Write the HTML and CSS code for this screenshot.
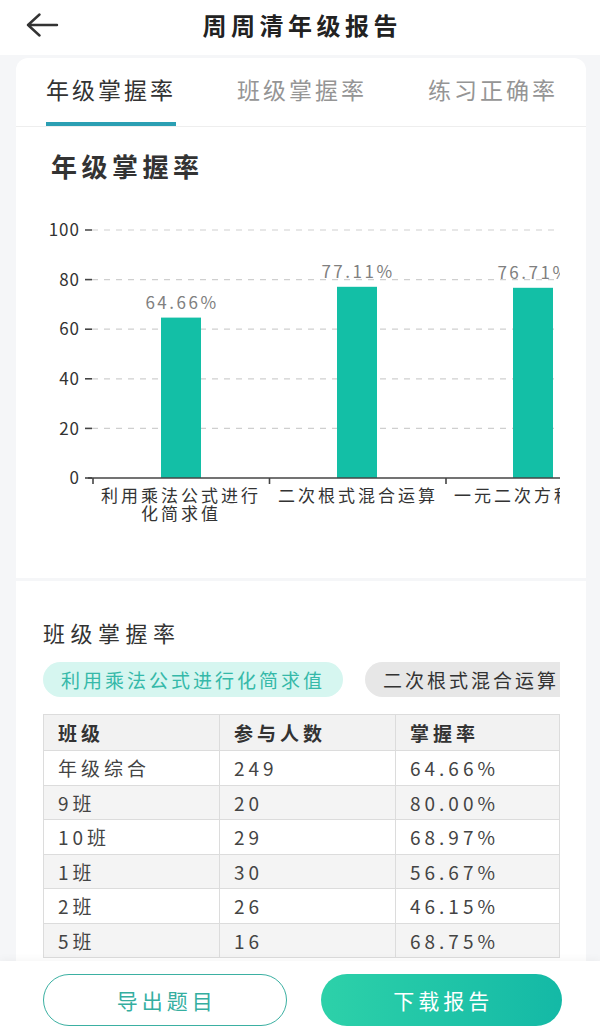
FILE: index.html
```html
<!DOCTYPE html>
<html lang="zh-CN">
<head>
  <meta charset="UTF-8" />
  <meta name="viewport" content="width=device-width, initial-scale=1.0"/>
  <title>周周清年级报告</title>
  <link rel="stylesheet" href="styles.css">
</head>
<body>

  <header class="top-bar">
    <span class="back">
      <svg width="34" height="24" viewBox="0 0 34 24">
        <path d="M2 12 H31 M13.5 1.5 L2 12 L13.5 22.5" fill="none" stroke="#333" stroke-width="2.4" stroke-linecap="round" stroke-linejoin="round"/>
      </svg>
    </span>
    <h1>周周清年级报告</h1>
    <span></span>
  </header>

  <!-- grade chart -->
  <div class="card card-grade">
    <div class="tabs">
      <div class="tab active">年级掌握率</div>
      <div class="tab">班级掌握率</div>
      <div class="tab">练习正确率</div>
    </div>

    <h2 class="chart-title">年级掌握率</h2>

    <svg class="chart" viewBox="16 184 544 394" width="544" height="394">
      <g class="grid">
        <line x1="92" y1="230" x2="557" y2="230"/>
        <line x1="92" y1="279.6" x2="557" y2="279.6"/>
        <line x1="92" y1="329.2" x2="557" y2="329.2"/>
        <line x1="92" y1="378.8" x2="557" y2="378.8"/>
        <line x1="92" y1="428.4" x2="557" y2="428.4"/>
      </g>
      <g class="ticks">
        <line x1="85" y1="230" x2="92" y2="230"/>
        <line x1="85" y1="279.6" x2="92" y2="279.6"/>
        <line x1="85" y1="329.2" x2="92" y2="329.2"/>
        <line x1="85" y1="378.8" x2="92" y2="378.8"/>
        <line x1="85" y1="428.4" x2="92" y2="428.4"/>
        <line x1="85" y1="478" x2="92" y2="478"/>
        <line x1="93" y1="478" x2="93" y2="484"/>
        <line x1="269.5" y1="478" x2="269.5" y2="484"/>
        <line x1="446" y1="478" x2="446" y2="484"/>
      </g>
      <g class="y-labels">
        <text x="80" y="230" dy="0.36em">100</text>
        <text x="80" y="279.6" dy="0.36em">80</text>
        <text x="80" y="329.2" dy="0.36em">60</text>
        <text x="80" y="378.8" dy="0.36em">40</text>
        <text x="80" y="428.4" dy="0.36em">20</text>
        <text x="80" y="478" dy="0.36em">0</text>
      </g>

      <rect class="bar" x="161" y="317.6" width="40" height="160.4"/>
      <rect class="bar" x="337" y="286.8" width="40" height="191.2"/>
      <rect class="bar" x="513" y="287.8" width="40" height="190.2"/>

      <g class="values">
        <text x="182" y="302.5" dy="0.36em">64.66%</text>
        <text x="358" y="271.5" dy="0.36em">77.11%</text>
        <text x="534" y="272.5" dy="0.36em">76.71%</text>
      </g>

      <path class="axis" d="M88 478 H562"/>

      <g class="x-labels">
        <text x="181" y="496" dy="0.36em">利用乘法公式进行</text>
        <text x="181" y="514" dy="0.36em">化简求值</text>
        <text x="358" y="496" dy="0.36em">二次根式混合运算</text>
        <text x="534" y="496" dy="0.36em">一元二次方程求解</text>
      </g>
    </svg>
  </div>

  <!-- class table -->
  <div class="card card-class">
    <h3 class="section-title">班级掌握率</h3>

    <div class="chips">
      <span class="chip active">利用乘法公式进行化简求值</span>
      <span class="chip">二次根式混合运算</span>
      <span class="chip">一元二次方程求解</span>
    </div>

    <table class="rate-table">
      <colgroup>
        <col class="col-1">
        <col class="col-2">
        <col>
      </colgroup>
      <thead>
        <tr><th>班级</th><th>参与人数</th><th>掌握率</th></tr>
      </thead>
      <tbody>
        <tr><td>年级综合</td><td>249</td><td>64.66%</td></tr>
        <tr><td>9班</td><td>20</td><td>80.00%</td></tr>
        <tr><td>10班</td><td>29</td><td>68.97%</td></tr>
        <tr><td>1班</td><td>30</td><td>56.67%</td></tr>
        <tr><td>2班</td><td>26</td><td>46.15%</td></tr>
        <tr><td>5班</td><td>16</td><td>68.75%</td></tr>
      </tbody>
    </table>
  </div>

  <div class="bottom-bar">
    <button class="btn btn-outline">导出题目</button>
    <button class="btn btn-fill">下载报告</button>
  </div>

</body>
</html>
```

FILE: styles.css
```css
body {
  margin: 0;
  background: #f5f6f8;
  font-family: "Noto Sans CJK SC", "Noto Sans", sans-serif;
  color: #333;
}

.top-bar {
  display: grid;
  grid-template-columns: 1fr auto 1fr;
  align-items: center;
  height: 50px;
  padding-bottom: 5px;
  background: #fff;
}

.top-bar h1 {
  margin: 0;
  padding-left: 4.5px;
  font-size: 24px;
  line-height: 34px;
  font-weight: 700;
  letter-spacing: 4.5px;
  color: #222;
}

.back {
  display: flex;
  padding-left: 26px;
}

.card {
  margin: 3px 14px 0 16px;
  background: #fff;
}

.card-grade {
  border-radius: 12px 12px 0 0;
  overflow: hidden;
}

/* tabs */
.tabs {
  display: flex;
  gap: 61px;
  padding-left: 30px;
  border-bottom: 1px solid #eee;
  white-space: nowrap;
}

.tab {
  flex: none;
  padding: 15px 0 17px;
  font-size: 23px;
  line-height: 32px;
  letter-spacing: 3px;
  color: #959595;
  border-bottom: 4px solid transparent;
}

.tab.active {
  color: #333;
  border-bottom-color: #2b9fb3;
}

.chart-title {
  margin: 0;
  padding: 21px 0 0 35px;
  font-size: 26px;
  line-height: 36px;
  font-weight: 700;
  letter-spacing: 4.5px;
  color: #333;
}

/* chart */
.chart {
  display: block;
  width: 544px;
  height: 394px;
}

.chart .grid line {
  stroke: #cfcfcf;
  stroke-width: 1.2;
  stroke-dasharray: 6 6;
}

.chart .ticks line,
.chart .axis {
  stroke: #444;
  stroke-width: 1.6;
  fill: none;
}

.chart .y-labels text {
  font-size: 17px;
  letter-spacing: 1px;
  fill: #333;
  text-anchor: end;
}

.chart .bar {
  fill: #13bfa6;
}

.chart .values text {
  font-size: 17px;
  letter-spacing: 2.5px;
  fill: #808080;
  text-anchor: middle;
}

.chart .x-labels text {
  font-size: 17px;
  letter-spacing: 3px;
  fill: #333;
  text-anchor: middle;
}

/* class section */
.card-class {
  padding: 36px 26px 90px 27px;
}

.section-title {
  margin: 0;
  font-size: 22px;
  line-height: 30px;
  font-weight: 400;
  letter-spacing: 5.5px;
  color: #333;
}

.chips {
  display: flex;
  gap: 22px;
  margin-top: 15px;
  overflow: hidden;
  white-space: nowrap;
}

.chip {
  flex: none;
  height: 35px;
  padding: 0 18px;
  line-height: 35px;
  border-radius: 18px;
  font-size: 19px;
  letter-spacing: 3px;
  background: #e7e7e7;
  color: #333;
}

.chip.active {
  background: #d6f6f0;
  color: #35b9a9;
}

.rate-table {
  width: 100%;
  margin-top: 17px;
  border-collapse: collapse;
  table-layout: fixed;
  font-size: 19px;
  letter-spacing: 4px;
  color: #444;
}

.col-1,
.col-2 {
  width: 176px;
}

.rate-table th,
.rate-table td {
  height: 33.5px;
  padding: 0 14px;
  border: 1px solid #dcdcdc;
  text-align: left;
  font-weight: 400;
}

.rate-table th {
  height: 35px;
  background: #f2f2f2;
  font-weight: 700;
  color: #333;
}

.rate-table tbody tr:nth-child(even) td {
  background: #f4f4f4;
}

/* bottom buttons */
.bottom-bar {
  position: fixed;
  left: 0;
  right: 0;
  bottom: 0;
  display: flex;
  gap: 34px;
  height: 52px;
  padding: 13px 38px 4px 43px;
  background: #fff;
  box-shadow: 0 -2px 8px rgba(0, 0, 0, 0.04);
}

.btn {
  flex: 1;
  height: 52px;
  border-radius: 26px;
  font-family: inherit;
  font-size: 21px;
  letter-spacing: 4px;
  padding: 0 0 0 4px;
  cursor: pointer;
}

.btn-outline {
  background: #fff;
  border: 1.5px solid #3bb0a2;
  color: #35ae9f;
}

.btn-fill {
  border: none;
  background: linear-gradient(90deg, #2dd1a9, #14b9a6);
  color: #fff;
}
```
